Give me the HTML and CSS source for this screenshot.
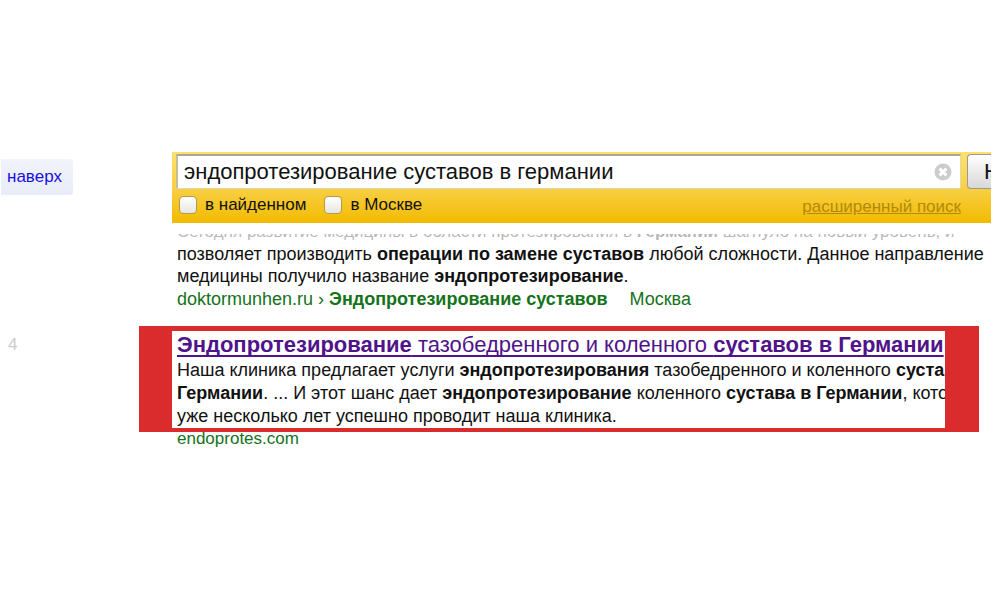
FILE: index.html
```html
<!DOCTYPE html>
<html lang="ru">
<head>
<meta charset="utf-8">
<title>эндопротезирование суставов в германии</title>
<link rel="stylesheet" href="styles.css">
</head>
<body>
<div class="page">
  <aside class="side"><a class="to-top" href="#top">наверх</a></aside>
  <form class="search" id="top">
    <div class="search-row">
      <div class="field">
        <input class="query" type="text" aria-label="Запрос" value="эндопротезирование суставов в германии">
        <button class="clear" type="button" aria-label="Очистить">
          <svg width="18" height="18" viewBox="0 0 18 18"><circle cx="9" cy="9" r="8.5" fill="#ccc"/><path d="M5.6 5.6l6.8 6.8M12.4 5.6l-6.8 6.8" stroke="#fff" stroke-width="3"/></svg>
        </button>
      </div>
      <button class="submit" type="submit">Найти</button>
    </div>
    <div class="options">
      <label class="option"><input class="tick" type="checkbox">в найденном</label>
      <label class="option"><input class="tick" type="checkbox">в Москве</label>
      <a class="advanced" href="#advanced">расширенный поиск</a>
    </div>
  </form>
  <article class="result first">
    <div class="faded"><p>Сегодня развитие медицины в области протезирования в <b>Германии</b> шагнуло на новый уровень, и</p></div>
    <p class="text">позволяет производить <b>операции по замене суставов</b> любой сложности. Данное направление<br>медицины получило название <b>эндопротезирование</b>.</p>
    <p class="source"><a href="#doktormunhen">doktormunhen.ru › <b>Эндопротезирование суставов</b></a><span class="region">Москва</span></p>
  </article>
  <span class="number">4</span>
  <article class="result second">
    <div class="frame">
      <div class="snippet">
        <h2 class="title"><a href="#endoprotes"><b>Эндопротезирование</b> тазобедренного и коленного <b>суставов в Германии</b></a></h2>
        <p class="text loose">Наша клиника предлагает услуги <b>эндопротезирования</b> тазобедренного и коленного <b>суставо</b><br><b>Германии</b>. ... И этот шанс дает <b>эндопротезирование</b> коленного <b>сустава в Германии</b>, котор<br>уже несколько лет успешно проводит наша клиника.</p>
      </div>
    </div>
    <p class="source inset"><a href="#endoprotes">endoprotes.com</a></p>
  </article>
</div>
</body>
</html>
```
FILE: styles.css
```css
* { box-sizing: border-box; }
body {
  margin: 0;
  background: #fff;
  color: #111;
  font-family: "Liberation Sans", Arial, sans-serif;
  font-size: 17px;
}
p, h2 { margin: 0; }
.page {
  display: grid;
  grid-template-columns: 139px 33px minmax(0, 1fr);
  padding: 152px 9px 40px 0;
}
.side { grid-column: 1; padding: 7px 0 0 1px; }
.to-top {
  display: inline-block;
  padding: 0 11px 0 6px;
  border-radius: 0 3px 3px 0;
  background: linear-gradient(#f2f4fc, #e7ecf8);
  color: #1a0fdc;
  line-height: 36px;
  text-decoration: none;
}
.search {
  grid-column: 3;
  overflow: hidden;
  padding: 2px 0 3px 4px;
  background: linear-gradient(#ffe26b, #f9d046 50%, #f2bb00);
}
.search-row { display: flex; gap: 6px; }
.field {
  flex: 1;
  display: flex;
  align-items: center;
  min-width: 0;
  height: 35px;
  padding: 0 8px 0 6px;
  border: 1px solid #e3d9ae;
  border-top: 2px solid #aaa799;
  border-left: 2px solid #c4bc9b;
  background: #fff;
}
.query {
  flex: 1;
  min-width: 0;
  padding: 0;
  border: 0;
  outline: 0;
  background: none;
  color: #111;
  font: 22px "Liberation Sans", Arial, sans-serif;
}
.clear { display: flex; padding: 0; border: 0; background: none; }
.submit {
  width: 24px;
  height: 35px;
  padding: 0 0 0 16px;
  overflow: hidden;
  border: 1px solid #999;
  border-right: 0;
  border-radius: 4px 0 0 4px;
  background: linear-gradient(#fff, #d8d8d8);
  color: #111;
  font: 22px "Liberation Sans", Arial, sans-serif;
  text-align: left;
}
.options {
  display: flex;
  align-items: center;
  gap: 18px;
  height: 31px;
  padding-right: 30px;
  padding-left: 3px;
}
.option { display: flex; align-items: center; gap: 8px; }
.tick {
  appearance: none;
  width: 18px;
  height: 18px;
  margin: 0;
  border: 1px solid #b59b4c;
  border-radius: 4px;
  background: linear-gradient(#fff, #e6e6e0);
}
.advanced { margin-left: auto; padding-top: 5px; color: #b18a0c; }
.result { min-width: 0; white-space: nowrap; }
.first { grid-column: 3; padding: 11px 0 0 5px; }
.faded {
  display: flex;
  align-items: flex-end;
  height: 9px;
  overflow: hidden;
  line-height: 22px;
  opacity: 0.3;
}
.text { font-size: 18px; line-height: 22px; }
.loose { line-height: 23px; }
.source { color: #14721a; font-size: 18px; line-height: 24px; }
.source a { color: inherit; text-decoration: none; }
.region { margin-left: 22px; }
.number {
  grid-column: 1;
  padding: 24px 0 0 8px;
  color: #ccc;
  line-height: 20px;
}
.second { grid-column: 2 / 4; padding: 15px 12px 0 0; }
.frame { padding: 5px 34px 4px 33px; background: #da2c2c; }
.snippet { overflow: hidden; padding-left: 5px; background: #fff; }
.title { font-size: 22px; font-weight: normal; line-height: 28px; }
.title a { color: #50148a; text-decoration-thickness: 2px; text-underline-offset: 3px; text-decoration-skip-ink: none; }
.inset { padding-left: 38px; font-size: 17px; line-height: 14px; }
```
